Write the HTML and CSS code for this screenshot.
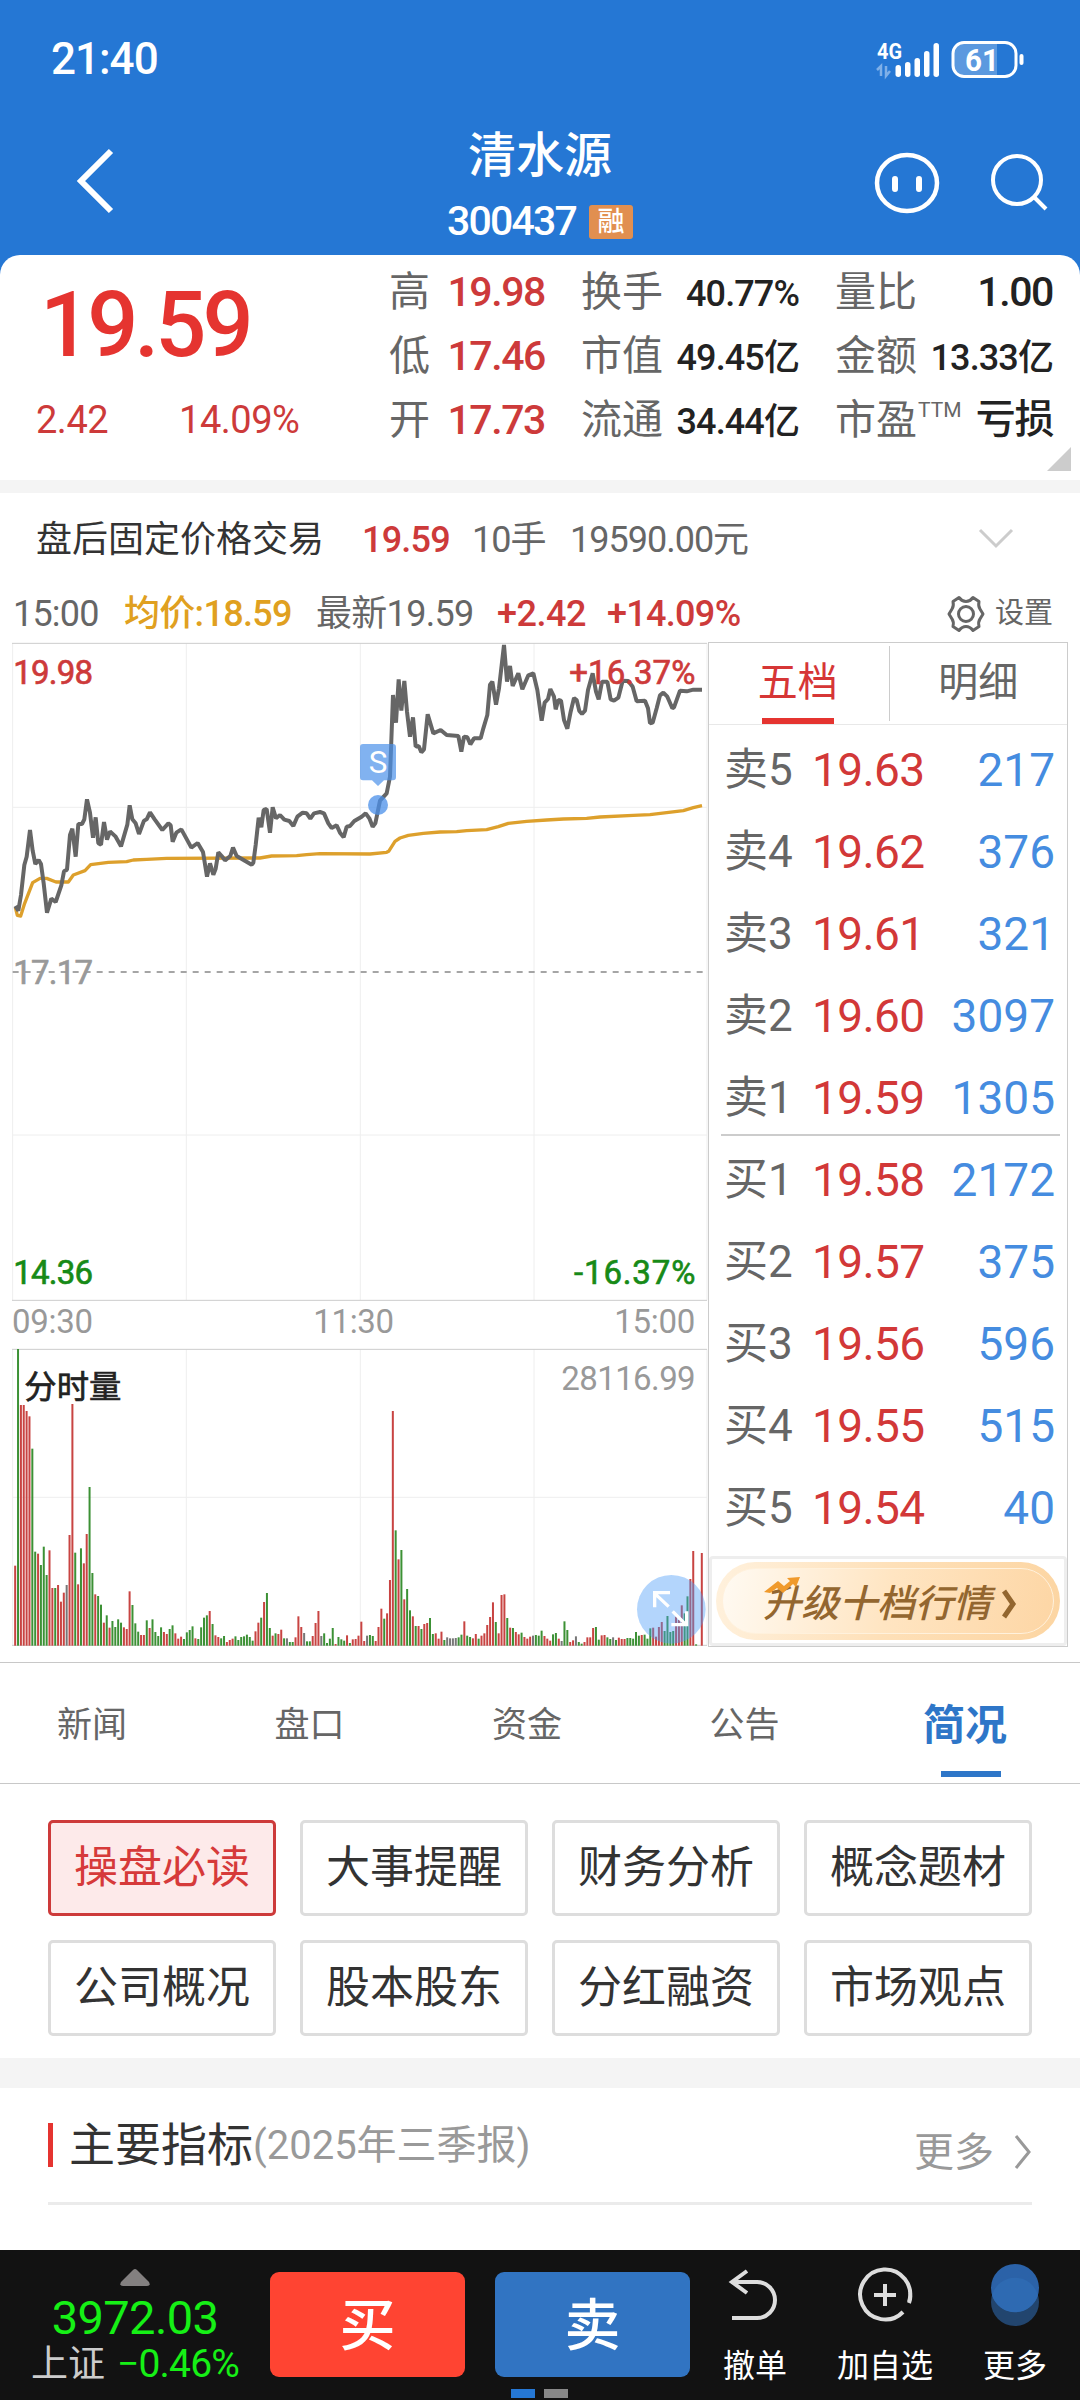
FILE: index.html
```html
<!DOCTYPE html>
<html lang="zh-CN">
<head>
    <meta charset="UTF-8">
    <title>清水源 300437</title>
    <link rel="stylesheet" href="styles.css">
</head>
<body>
    <div class="top">
        <div class="status-bar">
            <span class="time">21:40</span>
            <svg class="status-icons" width="152" height="44" viewBox="875 34 152 44">
                <text x="877" y="56" font-size="22" font-weight="700" fill="#fff" textLength="25" lengthAdjust="spacingAndGlyphs">4G</text>
                <path d="M877 67l4-4v10M890 68l-4 5V63" fill="none" stroke="#7fb0e8" stroke-width="2.5"/>
                <g fill="#fff">
                    <rect x="895.500" y="62" width="5.500" height="12" rx="2.700"/>
                    <rect x="905" y="59" width="5.500" height="15" rx="2.700"/>
                    <rect x="914.500" y="55" width="5.500" height="19" rx="2.700"/>
                    <rect x="924" y="48" width="5.500" height="26" rx="2.700"/>
                    <rect x="933.500" y="40" width="5.500" height="34" rx="2.700"/>
                </g>
                <path d="M963 41h34v31h-34q-9 0-9-9V50q0-9 9-9z" fill="#fff" opacity=".25"/>
                <rect x="953" y="39.500" width="63" height="34" rx="11" fill="none" stroke="#fff" stroke-width="3"/>
                <rect x="1019.500" y="51" width="4" height="11" rx="2" fill="#fff"/>
                <text x="965" y="68" font-size="31" font-weight="700" fill="#fff" textLength="34" lengthAdjust="spacingAndGlyphs">61</text>
            </svg>
        </div>
        <div class="nav">
            <svg class="back" width="40" height="70" viewBox="0 0 40 70">
                <path d="M36 5L6 35l30 30" fill="none" stroke="#fff" stroke-width="6"/>
            </svg>
            <div class="nav-title">
                <h1>清水源</h1>
                <div class="code">300437 <span class="badge">融</span></div>
            </div>
            <div class="nav-icons">
                <svg width="66" height="66" viewBox="0 0 66 66" fill="none" stroke="#fff" stroke-width="4.500" stroke-linecap="round">
                    <ellipse cx="33" cy="33" rx="30" ry="28"/>
                    <path d="M21 29v10M45 29v10" stroke-width="6"/>
                </svg>
                <svg width="66" height="66" viewBox="0 0 66 66" fill="none" stroke="#fff" stroke-width="4">
                    <circle cx="28" cy="30" r="24"/>
                    <path d="M45 47l12 12"/>
                </svg>
            </div>
        </div>
        <div class="quote">
            <div class="price-box">
                <div class="price">19.59</div>
                <div class="change"><span>2.42</span><span>14.09%</span></div>
            </div>
            <div class="stats">
                <div class="col col1">
                    <div class="stat"><label>高</label><b class="red">19.98</b></div>
                    <div class="stat"><label>低</label><b class="red">17.46</b></div>
                    <div class="stat"><label>开</label><b class="red">17.73</b></div>
                </div>
                <div class="col col2">
                    <div class="stat"><label>换手</label><b class="small">40.77%</b></div>
                    <div class="stat"><label>市值</label><b class="small">49.45亿</b></div>
                    <div class="stat"><label>流通</label><b class="small">34.44亿</b></div>
                </div>
                <div class="col col2">
                    <div class="stat"><label>量比</label><b>1.00</b></div>
                    <div class="stat"><label>金额</label><b class="small">13.33亿</b></div>
                    <div class="stat"><label>市盈<sup>TTM</sup></label><b class="cn">亏损</b></div>
                </div>
            </div>
            <div class="corner"></div>
        </div>
    </div>

    <div class="band"></div>

    <div class="after-hours">
        <span class="name">盘后固定价格交易</span>
        <span class="red ah-price">19.59</span>
        <span class="ah-vol">10手</span>
        <span class="ah-sum">19590.00元</span>
        <svg width="40" height="24" viewBox="0 0 40 24"><path d="M4 3l16 16L36 3" fill="none" stroke="#ccc" stroke-width="3"/></svg>
    </div>

    <div class="avg-row">
        <span class="w1">15:00</span>
        <span class="w2">均价:18.59</span>
        <span class="w3">最新19.59</span>
        <span class="w4 red">+2.42</span>
        <span class="w5 red">+14.09%</span>
        <div class="settings">
            <svg width="38" height="38" viewBox="0 0 38 38" fill="none" stroke="#666" stroke-width="3" stroke-linejoin="round">
                <path d="M12 2.500q3 4 7 4t7-4l6 4q-1 5 1 7.500l3 5l-3 5q-2 2.500-1 7.500l-6 4q-3-4-7-4t-7 4l-6-4q1-5-1-7.500l-3-5l3-5q2-2.500 1-7.500z"/>
                <circle cx="19" cy="19" r="7.500"/>
            </svg>
            <span>设置</span>
        </div>
    </div>

    <div class="market">
        <div class="charts">
            <svg class="price-chart" width="708" height="662" viewBox="0 30 2124 1986">
                <path d="M38 532H2121M38 1515H2121M38 40V2011M559 40V2011M1081 40V2011M1602 40V2011M2121 40V2011" stroke="#eee" stroke-width="3"/>
                <path d="M36 40H2121M36 2011H2121" stroke="#ccc" stroke-width="3"/>
                <path d="M38 1026H2112" stroke="#888" stroke-width="5" stroke-dasharray="18 18"/>
                <polyline fill="none" stroke="#dda02c" stroke-width="10" stroke-linejoin="round" points="46,832 52,856 62,858 74,820 98,758 120,745 140,745 168,756 205,756 220,735 255,722 272,704 325,697 380,695 400,690 440,688 500,685 780,684 815,678 890,677 920,674 960,671 1110,672 1160,667 1166,664 1185,634 1200,624 1225,616 1270,610 1320,606 1370,605 1400,602 1460,599 1495,590 1525,580 1580,574 1640,570 1690,567 1760,565 1800,561 1900,556 1950,554 2000,548 2050,542 2080,533 2106,527"/>
                <polyline fill="none" stroke="#666" stroke-width="12" stroke-linejoin="bevel" points="46,828 55,842 63,795 73,705 80,680 90,600 98,662 106,702 116,690 123,702 131,760 141,848 154,806 167,816 184,766 192,724 201,719 210,615 217,596 227,680 235,582 246,582 253,568 261,508 270,548 279,623 287,562 295,640 303,644 312,576 321,629 330,604 347,620 363,649 382,584 389,526 397,568 407,580 417,612 432,572 440,568 450,547 464,568 487,600 505,580 512,586 518,635 529,608 544,598 556,620 574,653 593,639 609,666 621,740 630,700 640,734 647,716 655,667 665,678 675,691 691,678 699,653 710,678 755,704 760,698 767,645 776,563 784,592 791,540 800,537 810,608 818,532 828,565 840,555 853,569 868,573 880,588 892,560 908,548 920,550 931,566 942,550 960,546 972,550 985,580 995,594 1010,586 1020,608 1031,622 1040,590 1050,588 1063,573 1085,560 1097,550 1108,565 1118,590 1126,580 1140,512 1160,490 1170,440 1179,195 1188,278 1196,148 1204,242 1213,153 1221,245 1230,320 1239,262 1247,350 1256,348 1264,367 1272,358 1283,253 1300,310 1322,300 1340,315 1375,318 1384,365 1392,320 1402,322 1411,343 1422,325 1442,325 1450,295 1462,255 1470,164 1477,155 1488,224 1497,175 1512,45 1521,155 1530,108 1538,168 1555,130 1567,178 1585,136 1600,130 1612,180 1625,272 1634,218 1644,207 1651,177 1662,200 1667,238 1675,210 1683,212 1692,270 1702,296 1712,245 1722,204 1730,210 1738,243 1746,252 1755,242 1764,180 1778,130 1788,185 1796,208 1806,155 1822,155 1832,208 1842,212 1855,203 1868,152 1885,153 1898,170 1910,214 1935,212 1944,235 1950,280 1958,278 1970,235 1980,196 1990,188 2002,200 2017,235 2022,232 2040,182 2060,184 2080,179 2106,179"/>
                <g fill="#4a90ea" opacity=".75">
                    <path d="M1089 342h90q9 0 9 9v91q0 9-9 9h-27l-18 17l-18-17h-27q-9 0-9-9v-91q0-9 9-9z" opacity=".92"/>
                    <circle cx="1134" cy="525" r="30"/>
                </g>
                <text x="1134" y="430" font-size="94" text-anchor="middle" fill="#fff">S</text>
                <g font-size="99">
                    <text x="40" y="161" fill="#cd3a3a" stroke="#cd3a3a" stroke-width="2" textLength="239">19.98</text>
                    <text x="1708" y="161" fill="#cd3a3a" stroke="#cd3a3a" stroke-width="2" textLength="378">+16.37%</text>
                    <text x="40" y="1061" fill="#999" stroke="#999" stroke-width="2" textLength="239">17.17</text>
                    <text x="40" y="1961" fill="#178a17" stroke="#178a17" stroke-width="2" textLength="239">14.36</text>
                    <text x="1722" y="1961" fill="#178a17" stroke="#178a17" stroke-width="2" textLength="364">-16.37%</text>
                </g>
            </svg>
            <div class="axis"><span>09:30</span><span>11:30</span><span>15:00</span></div>
            <svg class="volume-chart" width="708" height="300" viewBox="0 354 2124 900">
                <path d="M38 802H2121M38 358V1247M559 358V1247M1081 358V1247M1602 358V1247M2121 358V1247" stroke="#eee" stroke-width="3"/>
                <path d="M36 358H2121M36 1246H2121" stroke="#ccc" stroke-width="3"/>
                <g id="bars"></g>
                <text x="73" y="504" font-size="97" fill="#222" stroke="#222" stroke-width="2">分时量</text>
                <text x="1684" y="481" font-size="99" fill="#999" textLength="403">28116.99</text>
                <circle cx="2014" cy="1138" r="103" fill="#4a9cf8" opacity=".42"/>
                <path d="M2006 1130l-42-40M1964 1132v-44h46M2018 1144l42 42M2060 1144v40h-46" fill="none" stroke="#fff" stroke-width="10"/>
            </svg>
        </div>

        <div class="book">
            <div class="book-tabs">
                <div class="book-tab active">五档</div>
                <div class="book-tab">明细</div>
            </div>
            <div class="book-row"><span>卖5</span><span class="p">19.63</span><span class="q">217</span></div>
            <div class="book-row"><span>卖4</span><span class="p">19.62</span><span class="q">376</span></div>
            <div class="book-row"><span>卖3</span><span class="p">19.61</span><span class="q">321</span></div>
            <div class="book-row"><span>卖2</span><span class="p">19.60</span><span class="q">3097</span></div>
            <div class="book-row last-sell"><span>卖1</span><span class="p">19.59</span><span class="q">1305</span></div>
            <div class="book-row"><span>买1</span><span class="p">19.58</span><span class="q">2172</span></div>
            <div class="book-row"><span>买2</span><span class="p">19.57</span><span class="q">375</span></div>
            <div class="book-row"><span>买3</span><span class="p">19.56</span><span class="q">596</span></div>
            <div class="book-row"><span>买4</span><span class="p">19.55</span><span class="q">515</span></div>
            <div class="book-row"><span>买5</span><span class="p">19.54</span><span class="q">40</span></div>
            <div class="promo">
                <div class="pill">
                    <div class="pill-inner">
                        <span>升级十档行情</span>
                        <svg width="16" height="30" viewBox="0 0 16 30"><path d="M2 2l9 13L2 28" fill="none" stroke="#93662f" stroke-width="5"/></svg>
                    </div>
                    <svg class="spark" width="36" height="18" viewBox="0 0 36 18"><path d="M0 15L14 4l6 5l6-5l-3-3L36 0l-4 10l-3-3l-10 9l-6-5l-7 5z" fill="#f09a2c"/></svg>
                </div>
            </div>
        </div>
    </div>

    <div class="tabs">
        <div class="tab">新闻</div>
        <div class="tab">盘口</div>
        <div class="tab">资金</div>
        <div class="tab">公告</div>
        <div class="tab active">简况</div>
    </div>

    <div class="topics">
        <div class="topic active">操盘必读</div>
        <div class="topic">大事提醒</div>
        <div class="topic">财务分析</div>
        <div class="topic">概念题材</div>
        <div class="topic">公司概况</div>
        <div class="topic">股本股东</div>
        <div class="topic">分红融资</div>
        <div class="topic">市场观点</div>
    </div>

    <div class="band big"></div>

    <div class="section-head">
        <h2>主要指标</h2>
        <span class="period">(2025年三季报)</span>
        <span class="more">更多</span>
        <svg width="18" height="36" viewBox="0 0 18 36"><path d="M2 2l13 16L2 34" fill="none" stroke="#999" stroke-width="3"/></svg>
    </div>

    <div class="footer">
        <div class="index">
            <svg width="30" height="17" viewBox="0 0 30 17"><path d="M13 1q2-2 4 0l12 12q2 4-2 4H3q-4 0-2-4z" fill="#838080"/></svg>
            <div class="index-value">3972.03</div>
            <div class="index-change"><span>上证</span><em>−0.46%</em></div>
        </div>
        <div class="btn buy">买</div>
        <div class="btn sell">卖</div>
        <div class="tool tool1">
            <svg width="60" height="66" viewBox="0 0 60 66"><path d="M22 9L7 20l15 11M8 20h24a18 18 0 0 1 0 36H7" fill="none" stroke="#ddd" stroke-width="4"/></svg>
            <span>撤单</span>
        </div>
        <div class="tool tool2">
            <svg width="60" height="66" viewBox="0 0 60 66"><path d="M54 40A25 25 0 1 0 48 50M54 41q2-5 1-10M30 22v22M19 33h22" fill="none" stroke="#ddd" stroke-width="4"/></svg>
            <span>加自选</span>
        </div>
        <div class="tool tool3">
            <svg width="60" height="66" viewBox="0 0 60 66"><circle cx="30" cy="40" r="24" fill="#22456e"/><circle cx="30" cy="26" r="24" fill="#2b62a8"/><path d="M7 33a24 24 0 0 1 46 0a24 24 0 0 1-46 0z" fill="#2e6ab2"/></svg>
            <span>更多</span>
        </div>
        <div class="pager"><i class="on"></i><i></i></div>
    </div>

    <script>
        // r = up, g = down, k = flat; the number is the top of the bar
        const volume = `r1007 g357 r525 r525 r543 r559 g656 g965 r971 g1005 g950 g1035 r961 r1074 g1074 r1065 r1115 r1088 k1065 r915
            r522 g968 r1063 g955 r1000 r912 g771 g1029 r1093 g1098 g1124 r1178 g1156 r1193 g1173 g1191 g1168 g1178 r1192 r1197
            r1084 g1125 g1180 g1205 r1215 r1215 g1171 r1194 g1168 g1206 g1218 g1192 r1206 r1212 g1197 g1186 r1210 r1226 r1220 g1227
            g1207 g1200 g1189 r1225 g1227 g1192 g1163 g1156 r1143 g1182 r1216 r1221 g1225 g1218 r1236 r1230 r1226 g1219 g1230 g1221
            g1219 g1214 g1221 g1232 r1204 r1178 g1163 r1116 g1089 g1194 r1217 g1210 r1212 r1199 g1225 k1225 g1236 g1236 r1222 r1159
            r1191 k1209 g1234 g1234 r1218 r1179 r1143 k1218 g1210 g1239 g1226 g1194 r1242 g1221 g1228 g1232 r1216 g1239 r1228 r1227
            r1217 r1175 r1233 k1217 g1215 g1218 r1233 r1191 r1136 g1166 r1150 r1050 r543 g901 r988 g960 r1108 g1077 g1141 r1159
            g1188 r1188 g1197 r1182 r1179 g1164 g1212 r1210 r1226 r1205 g1230 k1222 k1225 k1225 k1224 g1222 g1214 r1174 g1217 g1221
            r1225 r1212 g1226 r1217 r1210 r1185 r1161 r1117 g1176 r1210 r1095 r1093 g1164 r1193 g1194 r1206 r1213 g1208 r1221 r1226
            r1220 k1217 g1215 g1217 g1202 r1218 r1226 r1232 g1213 g1209 r1226 k1233 g1174 g1200 r1236 r1231 k1219 g1236 g1241 r1236
            r1222 r1222 r1194 g1191 g1229 r1216 r1215 g1222 g1227 k1222 g1230 r1223 r1227 r1227 g1224 g1224 g1226 g1206 g1217 r1215
            g1214 g1226 g1195 r1193 r1220 r1191 r1176 g1203 g1158 g1206 g1203 r1160 r1170 r1126 g1150 g1099 r1047 r963 g1243 k1247
            r969`.split(/\s+/);
        const colors = { r: '#c84442', g: '#3c9135', k: '#777' };

        document.getElementById('bars').innerHTML = volume.map((v, i) => {
            const top = Number(v.slice(1));
            return `<rect x="${(42.5 + i * 8.583).toFixed(1)}" y="${top}" width="6" height="${1247 - top}" fill="${colors[v[0]]}"/>`;
        }).join('');
    </script>
</body>
</html>
```

FILE: styles.css
```css
* {
    box-sizing: border-box;
}
body {
    width: 1080px;
    height: 2400px;
    margin: 0;
    overflow: hidden;
    background-color: #fff;
    color: #666;
    font-family: Roboto, "Noto Sans CJK SC", sans-serif;
    line-height: 1;
    white-space: nowrap;
}
h1, h2 {
    margin: 0;
    font-weight: 500;
}
svg {
    display: block;
    flex-shrink: 0;
}
.red {
    color: #cd3a3a;
}

/* header */
.top {
    background-color: #2577d4;
}
.status-bar {
    display: flex;
    justify-content: space-between;
    align-items: center;
    height: 118px;
    padding: 0 53px 0 51px;
    color: #fff;
}
.time {
    font-size: 44px;
    font-weight: 500;
    letter-spacing: -1px;
}
.nav {
    display: flex;
    height: 137px;
    color: #fff;
}
.back {
    margin: 28px 0 0 75px;
}
.nav-title {
    width: 850px;
    margin-left: 0;
    padding-top: 14px;
    text-align: center;
}
.nav {
    position: relative;
}
.nav-title h1 {
    font-size: 48px;
}
.code {
    display: flex;
    align-items: center;
    justify-content: center;
    gap: 13px;
    margin-top: 21px;
    font-size: 41px;
    font-weight: 500;
    letter-spacing: -1.8px;
}
.badge {
    width: 44px;
    height: 34px;
    border-radius: 3px;
    background-color: #e18f50;
    font-size: 27px;
    line-height: 34px;
    text-align: center;
    letter-spacing: 0;
}
.nav-icons {
    display: flex;
    gap: 49px;
    margin-left: -91px;
    padding: 32px 25px 0 0;
}
.quote {
    position: relative;
    display: flex;
    height: 225px;
    padding-top: 5px;
    background-color: #fff;
    border-radius: 20px 20px 0 0;
}
.price-box {
    width: 390px;
    padding: 21px 0 0 40px;
    color: #e53430;
}
.price {
    font-size: 90px;
    font-weight: 500;
    letter-spacing: -4px;
}
.change {
    display: flex;
    gap: 71px;
    margin-top: 30px;
    margin-left: -4px;
    color: #cd3a3a;
    font-size: 38px;
    letter-spacing: -0.5px;
}
.stats {
    display: flex;
    gap: 37px;
}
.col1 {
    width: 155px;
}
.col2 {
    width: 217px;
}
.stat {
    display: flex;
    justify-content: space-between;
    align-items: center;
    height: 64px;
    font-size: 41px;
}
.stat b {
    font-weight: 500;
    letter-spacing: -1.4px;
    color: #222;
}
.stat b.red {
    color: #cd3a3a;
}
.stat .small {
    padding-top: 3px;
    font-size: 36px;
    letter-spacing: -0.9px;
}
.stat .cn {
    font-size: 40px;
}
.stat label {
    display: flex;
    margin-left: -1px;
}
.stat sup {
    font-size: 21px;
    line-height: 1;
    margin-left: 1px;
}
.corner {
    position: absolute;
    right: 9px;
    bottom: 9px;
    border-left: 24px solid transparent;
    border-bottom: 24px solid #ccc;
}
.band {
    height: 13px;
    background-color: #f4f4f4;
}

/* rows above the chart */
.after-hours {
    display: flex;
    align-items: center;
    height: 92px;
    padding: 2px 64px 0 36px;
    font-size: 36px;
}
.after-hours .name {
    width: 326px;
    color: #333;
}
.after-hours .ah-price {
    width: 110px;
    font-weight: 500;
    letter-spacing: -0.8px;
}
.after-hours .ah-vol {
    width: 98px;
    letter-spacing: -1px;
}
.after-hours .ah-sum {
    letter-spacing: -1px;
}
.after-hours svg {
    margin-left: auto;
    margin-top: -2px;
}
.avg-row {
    display: flex;
    align-items: center;
    height: 55px;
    padding: 2px 27px 0 13px;
    font-size: 36px;
}
.w1 {
    width: 111px;
    letter-spacing: -0.8px;
}
.w2 {
    width: 192px;
    color: #e0a020;
    letter-spacing: -0.7px;
    font-weight: 500;
}
.w3 {
    width: 181px;
    letter-spacing: -0.7px;
}
.w4 {
    width: 110px;
    letter-spacing: -0.5px;
    font-weight: 500;
}
.w5 {
    letter-spacing: -0.7px;
    font-weight: 500;
}
.settings {
    display: flex;
    align-items: center;
    gap: 10px;
    margin-left: auto;
    font-size: 29px;
}

/* charts */
.market {
    display: flex;
    height: 1022px;
}
.charts {
    width: 708px;
}
.axis {
    display: flex;
    justify-content: space-between;
    height: 46px;
    padding: 3px 13px 0 12px;
    color: #999;
    font-size: 33px;
    letter-spacing: -0.3px;
}

/* order book */
.book {
    width: 360px;
    height: 1005px;
    margin-top: 2px;
    border: 1px solid #ccc;
}
.book-tabs {
    display: flex;
    height: 82px;
    margin-bottom: 4px;
    border-bottom: 1px solid #e8e8e8;
}
.book-tab {
    display: flex;
    justify-content: center;
    flex: 1;
    height: 75px;
    margin-top: 3px;
    padding-top: 17px;
    font-size: 40px;
}
.book-tab + .book-tab {
    border-left: 1px solid #ccc;
}
.book-tab.active {
    position: relative;
    padding-right: 2px;
    color: #d63636;
}
.book-tab.active::after {
    content: "";
    position: absolute;
    bottom: -3px;
    left: 53px;
    width: 72px;
    height: 6px;
    background-color: #e53430;
}
.book-row {
    display: flex;
    align-items: center;
    height: 82px;
    padding: 0 12px 0 15px;
    font-size: 46px;
}
.book-row span:first-child {
    width: 88px;
    font-size: 44px;
}
.book-row .p {
    color: #d23838;
    letter-spacing: -0.6px;
}
.book-row .q {
    margin-left: auto;
    color: #458ce0;
}
.last-sell {
    background: linear-gradient(#ccc, #ccc) 12px 77px / 339px 2px no-repeat;
}
.promo {
    height: 90px;
    margin-top: 7px;
    padding: 3px 3px 3px 4px;
    border: 3px solid #eee;
    border-radius: 4px;
}
.pill {
    position: relative;
    width: 344px;
    height: 78px;
    padding: 6px;
    border-radius: 39px;
    background: linear-gradient(100deg, #fff1dd, #fee0b8 50%, #fcd5a2);
}
.pill-inner {
    display: flex;
    align-items: center;
    height: 66px;
    padding: 5px 0 0 40px;
    gap: 11px;
    border: 1px solid #fff1dc;
    border-radius: 33px;
    background: linear-gradient(100deg, #fffaf2, #ffe5c2 50%, #fdd6a5);
    color: #93662f;
    font-size: 38px;
    font-weight: 500;
    font-style: italic;
}
.spark {
    position: absolute;
    left: 48px;
    top: 15px;
}

/* tabs */
.tabs {
    display: flex;
    justify-content: space-between;
    height: 122px;
    padding: 0 73px 0 57px;
    border-top: 1px solid #c8c8c8;
    border-bottom: 1px solid #c8c8c8;
}
.tab {
    position: relative;
    padding-top: 45px;
    font-size: 35px;
}
.tab:nth-child(3) {
    left: 2px;
}
.tab:nth-child(2) {
    left: 1px;
}
.tab:nth-child(4) {
    left: 3px;
}
.tab.active {
    padding-top: 42px;
    color: #2e76c8;
    font-size: 42px;
    font-weight: 700;
}
.tab.active::after {
    content: "";
    position: absolute;
    left: 18px;
    bottom: 6px;
    width: 60px;
    height: 6px;
    background-color: #2e76c8;
}
.topics {
    display: grid;
    grid-template-columns: repeat(4, 228px);
    gap: 24px;
    height: 274px;
    padding: 36px 48px 0;
    align-content: start;
}
.topic {
    height: 96px;
    padding-top: 23px;
    border: 3px solid #ddd;
    border-radius: 5px;
    color: #333;
    font-size: 44px;
    text-align: center;
}
.topic.active {
    border-color: #cd3a3a;
    background-color: #fdeaea;
    color: #d63a3a;
}
.band.big {
    height: 30px;
}
.section-head {
    display: flex;
    align-items: center;
    height: 117px;
    margin: 0 48px;
    border-bottom: 3px solid #ebebeb;
    color: #999;
    font-size: 40px;
}
.section-head h2 {
    padding-left: 16px;
    border-left: 5px solid #e53430;
    color: #333;
    font-size: 46px;
    line-height: 44px;
    font-weight: 400;
}
.period {
    padding-top: 2px;
}
.more {
    margin: 15px 20px 0 auto;
}
.section-head svg {
    margin-top: 14px;
}

/* bottom bar */
.footer {
    position: relative;
    display: flex;
    height: 150px;
    margin-top: 45px;
    background-color: #121212;
    color: #fff;
}
.index {
    display: flex;
    flex-direction: column;
    align-items: center;
    width: 270px;
    padding-top: 19px;
    color: #16f016;
}
.index-value {
    margin-top: 8px;
    font-size: 47px;
    letter-spacing: -0.6px;
}
.index-change {
    display: flex;
    align-items: center;
    gap: 12px;
    margin-top: 4px;
    font-size: 39px;
    letter-spacing: -0.8px;
}
.index-change em {
    font-style: normal;
}
.index-change span {
    color: #ccc;
    font-size: 37px;
    letter-spacing: 0;
}
.btn {
    width: 195px;
    height: 105px;
    margin: 22px 30px 0 0;
    border-radius: 9px;
    font-size: 56px;
    font-weight: 500;
    line-height: 109px;
    text-align: center;
}
.buy {
    background-color: #ff4432;
}
.sell {
    background-color: #3174c2;
}
.tool {
    display: flex;
    flex-direction: column;
    align-items: center;
    padding-top: 12px;
    font-size: 32px;
}
.tool span {
    margin-top: 22px;
}
.tool1 {
    width: 70px;
}
.tool2 {
    width: 190px;
}
.tool3 {
    width: 70px;
}
.pager {
    position: absolute;
    left: 511px;
    bottom: 2px;
    display: flex;
    gap: 9px;
}
.pager i {
    width: 24px;
    height: 9px;
    background-color: #888;
}
.pager .on {
    background-color: #2577d4;
}
```
